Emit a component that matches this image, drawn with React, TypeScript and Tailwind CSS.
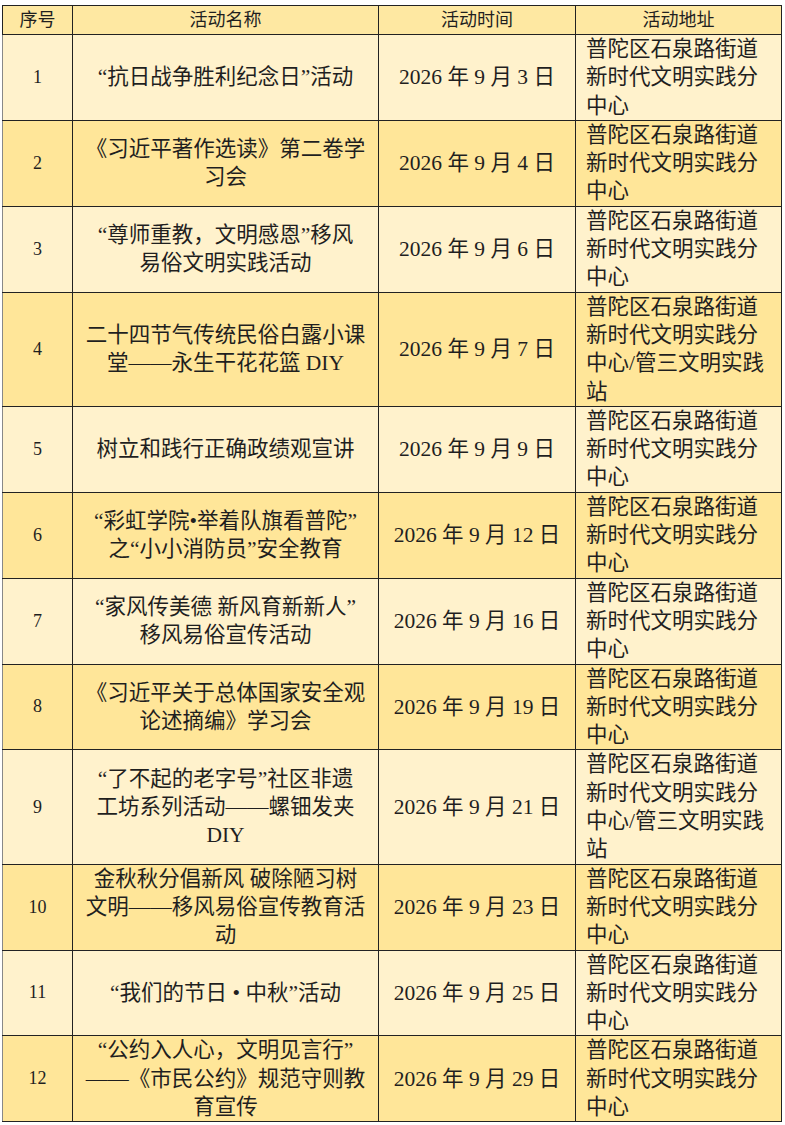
import React from 'react';

type Row = {
  no: string;
  name: string[];
  date: string;
  addr: string[];
};

const addr3 = ['普陀区石泉路街道', '新时代文明实践分', '中心'];
const addr4 = ['普陀区石泉路街道', '新时代文明实践分', '中心/管三文明实践', '站'];

const rows: Row[] = [
  { no: '1', name: ['“抗日战争胜利纪念日”活动'], date: '2026 年 9 月 3 日', addr: addr3 },
  { no: '2', name: ['《习近平著作选读》第二卷学', '习会'], date: '2026 年 9 月 4 日', addr: addr3 },
  { no: '3', name: ['“尊师重教，文明感恩”移风', '易俗文明实践活动'], date: '2026 年 9 月 6 日', addr: addr3 },
  { no: '4', name: ['二十四节气传统民俗白露小课', '堂——永生干花花篮 DIY'], date: '2026 年 9 月 7 日', addr: addr4 },
  { no: '5', name: ['树立和践行正确政绩观宣讲'], date: '2026 年 9 月 9 日', addr: addr3 },
  { no: '6', name: ['“彩虹学院•举着队旗看普陀”', '之“小小消防员”安全教育'], date: '2026 年 9 月 12 日', addr: addr3 },
  { no: '7', name: ['“家风传美德 新风育新新人”', '移风易俗宣传活动'], date: '2026 年 9 月 16 日', addr: addr3 },
  { no: '8', name: ['《习近平关于总体国家安全观', '论述摘编》学习会'], date: '2026 年 9 月 19 日', addr: addr3 },
  { no: '9', name: ['“了不起的老字号”社区非遗', '工坊系列活动——螺钿发夹', 'DIY'], date: '2026 年 9 月 21 日', addr: addr4 },
  { no: '10', name: ['金秋秋分倡新风 破除陋习树', '文明——移风易俗宣传教育活', '动'], date: '2026 年 9 月 23 日', addr: addr3 },
  { no: '11', name: ['“我们的节日 • 中秋”活动'], date: '2026 年 9 月 25 日', addr: addr3 },
  { no: '12', name: ['“公约入人心，文明见言行”', '——《市民公约》规范守则教', '育宣传'], date: '2026 年 9 月 29 日', addr: addr3 },
];

const Lines = ({ lines }: { lines: string[] }) => (
  <>
    {lines.map((l, i) => (
      <div key={i} className="whitespace-nowrap">
        {l}
      </div>
    ))}
  </>
);

export default function App() {
  return (
    <div className="min-h-[1125px] bg-white pt-[5px] pl-[2px] text-[#1f1f1f] font-['Liberation_Serif','Noto_Sans_CJK_SC',serif]">
      <table className="w-[779px] table-fixed border-collapse">
        <colgroup>
          <col className="w-[70px]" />
          <col className="w-[306px]" />
          <col className="w-[197px]" />
          <col className="w-[206px]" />
        </colgroup>
        <thead>
          <tr className="bg-[#fee8a2] text-[18px] leading-[28px]">
            <th className="border border-[#222] font-normal">序号</th>
            <th className="border border-[#222] font-normal">活动名称</th>
            <th className="border border-[#222] font-normal">活动时间</th>
            <th className="border border-[#222] font-normal">活动地址</th>
          </tr>
        </thead>
        <tbody>
          {rows.map((r, i) => (
            <tr key={r.no} className={i % 2 === 0 ? 'bg-[#fff2cc]' : 'bg-[#ffe699]'}>
              <td className="border border-[#222] border-l-[#888] text-center align-middle text-[18px]">{r.no}</td>
              <td className="border border-[#222] px-1 text-center align-middle text-[21.5px] leading-[28.3px]">
                <Lines lines={r.name} />
              </td>
              <td className="border border-[#222] text-center align-middle text-[21.5px] whitespace-nowrap">{r.date}</td>
              <td className="border border-[#222] pl-[10px] pr-1 text-left align-middle text-[21.5px] leading-[28.3px]">
                <Lines lines={r.addr} />
              </td>
            </tr>
          ))}
        </tbody>
      </table>
    </div>
  );
}
